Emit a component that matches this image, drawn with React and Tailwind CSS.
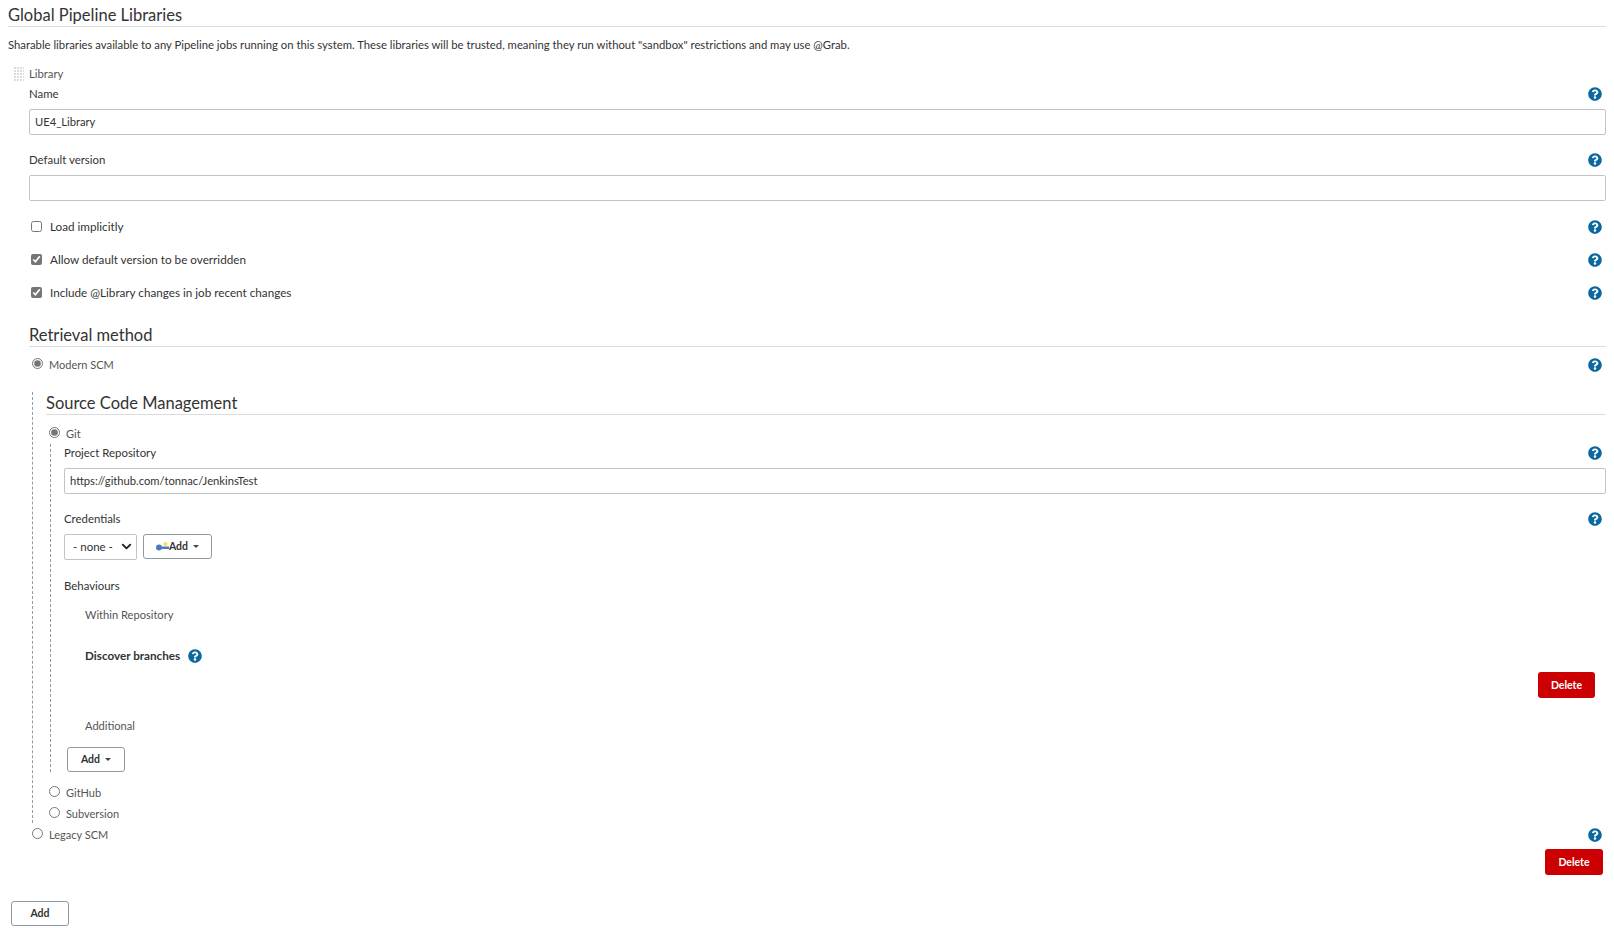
import React from 'react';
import { FaQuestionCircle } from 'react-icons/fa';
import { ChevronDown } from 'lucide-react';

const Help = ({ className = 'mr-[4px]' }) => (
  <FaQuestionCircle className={`w-[14px] h-[14px] text-[#0b689f] shrink-0 ${className}`} />
);

const Heading = ({ children }) => (
  <div className="h-[22px] box-content border-b border-[#dcdcdc] text-[16.5px] leading-[22px] text-[#333]">
    {children}
  </div>
);

const Label = ({ children, help, className = '' }) => (
  <div className={`h-[18px] flex items-center justify-between text-[11.4px] text-[#333] ${className}`}>
    <span>{children}</span>
    {help && <Help />}
  </div>
);

const TextBox = ({ value = '', className = '' }) => (
  <input
    readOnly
    value={value}
    className={`block w-full h-[26px] px-[5px] pb-[1px] border border-[#c3c3c3] rounded-[2px] text-[11.2px] text-[#333] outline-none ${className}`}
  />
);

const Check = ({ label, checked, className = '' }) => (
  <label className={`h-[20px] flex items-center justify-between ${className}`}>
    <span className="flex items-center text-[11.7px] text-[#333]">
      <input
        type="checkbox"
        readOnly
        checked={checked}
        className="w-[11px] h-[11px] ml-[2px] mr-[8px] accent-[#757575]"
      />
      {label}
    </span>
    <Help />
  </label>
);

const Radio = ({ label, checked, help, className = '' }) => (
  <label className={`h-[18px] flex items-center justify-between ${className}`}>
    <span className="flex items-center text-[11px] text-[#555]">
      <input
        type="radio"
        readOnly
        checked={checked}
        className="w-[11px] h-[11px] ml-[3px] mr-[6px] -mt-[4px] accent-[#757575]"
      />
      {label}
    </span>
    {help && <Help />}
  </label>
);

const Caret = () => (
  <span className="inline-block ml-[5px] border-x-[3.5px] border-t-[3.5px] border-x-transparent border-t-[#444]" />
);

const OutlineButton = ({ children, className = '' }) => (
  <button className={`h-[25px] w-[58px] flex items-center justify-center border border-[#8e99a3] rounded-[3px] bg-white text-[10.5px] font-bold text-[#333] ${className}`}>
    {children}
  </button>
);

const DeleteButton = ({ className = '', width = 'w-[57px]' }) => (
  <div className={`flex justify-end ${className}`}>
    <button className={`h-[26px] pt-[1px] rounded-[3px] bg-[#cc0003] text-white text-[10.5px] font-bold ${width}`}>
      Delete
    </button>
  </div>
);

const KeyIcon = () => (
  <svg width="13" height="10" viewBox="0 0 13 10" className="shrink-0">
    <circle cx="9.5" cy="2" r="2" fill="#f4e04d" />
    <circle cx="3" cy="5.5" r="3" fill="#4a7cb8" />
    <rect x="4" y="4.5" width="9" height="2.5" fill="#4a7cb8" />
  </svg>
);

const DragHandle = () => (
  <svg width="10" height="15" className="ml-[6px] mr-[5px] shrink-0">
    <defs>
      <pattern id="handle-dots" width="3" height="3" patternUnits="userSpaceOnUse">
        <rect width="2" height="2" fill="#dddddd" />
      </pattern>
    </defs>
    <rect width="10" height="15" fill="url(#handle-dots)" />
  </svg>
);

const App = () => {
  return (
    <div className="pl-2 pr-[8px] text-[11.3px] text-[#333] bg-white" style={{ fontFamily: 'Lato, sans-serif' }}>
      <div className="h-[26px] box-content border-b border-[#dcdcdc] text-[16.5px] leading-[30px] text-[#333]">
        Global Pipeline Libraries
      </div>
      <div className="h-[36px] flex items-center">
        Sharable libraries available to any Pipeline jobs running on this system. These libraries will be trusted, meaning they run without "sandbox" restrictions and may use @Grab.
      </div>

      <div className="h-[22px] flex items-center text-[#555]">
        <DragHandle />
        Library
      </div>

      <div className="pl-[21px]">
        <Label help>Name</Label>
        <TextBox value="UE4_Library" className="mt-[6px]" />
        <Label help className="mt-[16px]">Default version</Label>
        <TextBox className="mt-[6px]" />

        <Check label="Load implicitly" className="mt-[16px]" />
        <Check label="Allow default version to be overridden" checked className="mt-[13px]" />
        <Check label="Include @Library changes in job recent changes" checked className="mt-[13px]" />

        <div className="mt-[21px]">
          <Heading>Retrieval method</Heading>
        </div>
        <Radio label="Modern SCM" checked help className="mt-[9px]" />

        <div className="mt-[18px] ml-[3px] pl-[13px] border-l border-dashed border-[#999]">
          <Heading>Source Code Management</Heading>
          <Radio label="Git" checked className="mt-[10px]" />

          <div className="ml-[4px] pl-[13px] border-l border-dashed border-[#999]">
            <Label help className="mt-[1px]">Project Repository</Label>
            <TextBox value="https://github.com/tonnac/JenkinsTest" className="mt-[6px]" />
            <Label help className="mt-[16px]">Credentials</Label>

            <div className="mt-[6px] flex gap-[6px]">
              <div className="relative w-[73px] h-[26px]">
                <select className="appearance-none w-full h-full pl-[8px] border border-[#c3c3c3] rounded-[2px] bg-white text-[11.5px] text-[#333] outline-none">
                  <option>- none -</option>
                </select>
                <ChevronDown className="absolute right-[3px] top-[5px] w-[15px] h-[15px] text-[#222] pointer-events-none" strokeWidth={3} />
              </div>
              <OutlineButton className="w-[69px]">
                <KeyIcon />
                Add
                <Caret />
              </OutlineButton>
            </div>

            <Label className="mt-[17px]">Behaviours</Label>
            <div className="pl-[21px]">
              <div className="mt-[11px] h-[18px] flex items-center text-[11.1px] text-[#555]">Within Repository</div>
              <div className="mt-[23px] h-[18px] flex items-center gap-[8px] text-[11.7px] font-bold text-[#333]">
                Discover branches
                <Help className="" />
              </div>
            </div>
            <DeleteButton className="mt-[7px] mr-[11px]" />
            <div className="pl-[21px] mt-[19px] h-[18px] flex items-center text-[11.1px] text-[#555]">Additional</div>
            <OutlineButton className="mt-[12px] ml-[3px]">
              Add
              <Caret />
            </OutlineButton>
          </div>

          <Radio label="GitHub" className="mt-[12px]" />
          <Radio label="Subversion" className="mt-[3px]" />
        </div>

        <Radio label="Legacy SCM" help className="mt-[3px]" />
        <DeleteButton className="mt-[5px] mr-[3px]" width="w-[58px]" />
      </div>

      <OutlineButton className="mt-[26px] ml-[3px]">Add</OutlineButton>
    </div>
  );
};

export default App;
